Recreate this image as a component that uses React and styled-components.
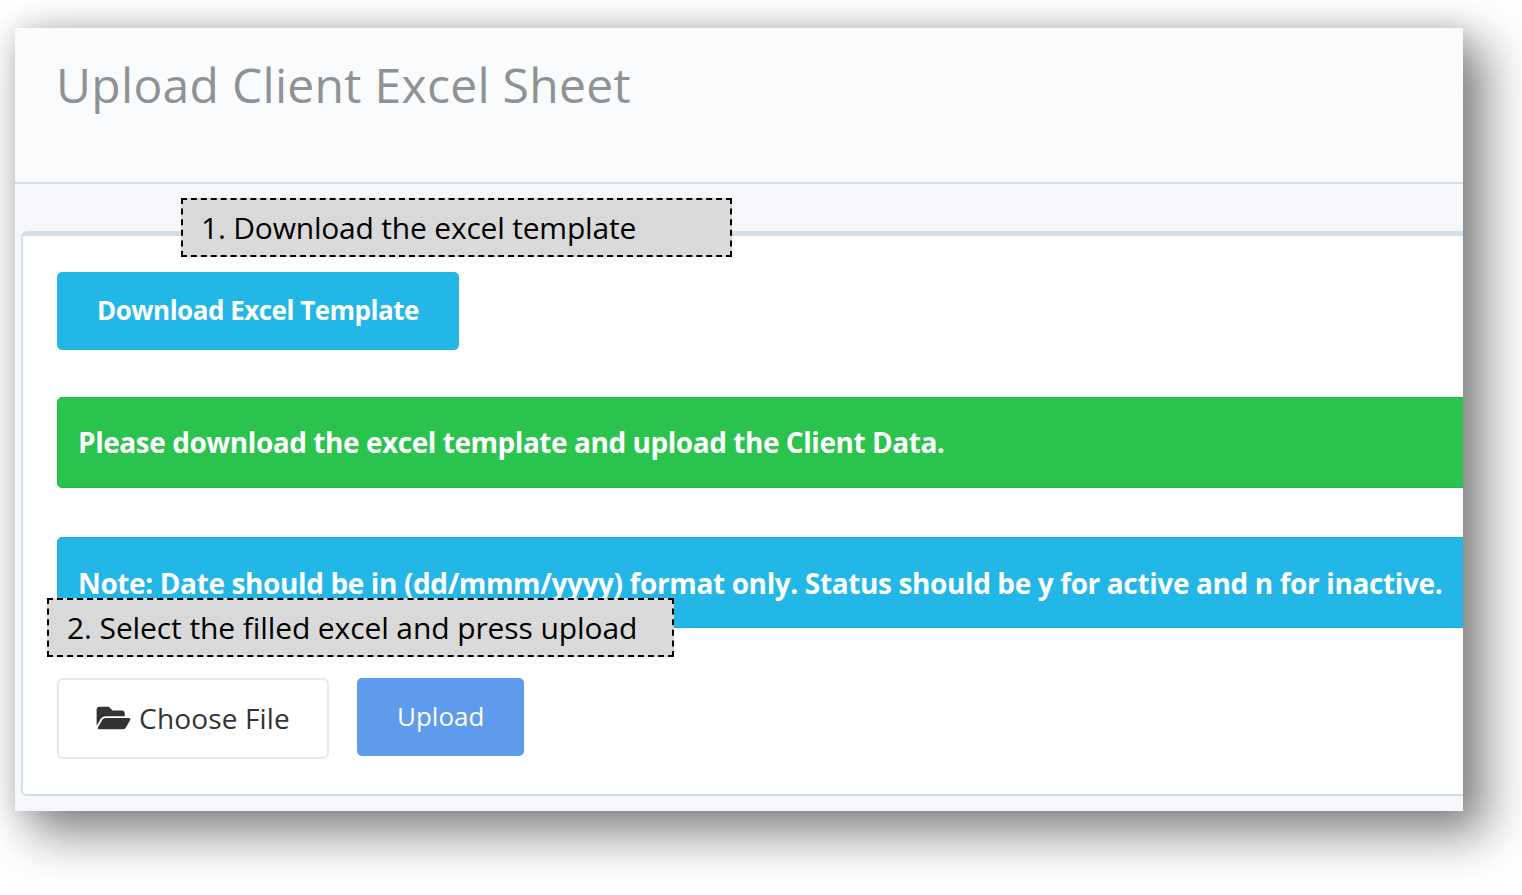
import React from "react";
import styled, { createGlobalStyle } from "styled-components";
import { FaFolderOpen } from "react-icons/fa";

const GlobalStyle = createGlobalStyle`
  html, body {
    margin: 0;
    background: #fff;
  }
  body {
    font-family: "Open Sans", "Noto Sans", "Liberation Sans", sans-serif;
    overflow: hidden;
  }
`;

const Stage = styled.div`
  width: 1522px;
  height: 895px;
  box-sizing: border-box;
  padding: 28px 59px 84px 15px;
  overflow: hidden;
`;

const Screen = styled.div`
  position: relative;
  height: 783px;
  display: flex;
  flex-direction: column;
  background: #f5f7fb;
  box-shadow: 0 0 26px rgba(0, 0, 0, 0.14), 20px 20px 46px 4px rgba(0, 0, 0, 0.46);
`;

const Clip = styled.div`
  flex: 1;
  display: flex;
  flex-direction: column;
  overflow: hidden;
`;

const Header = styled.header`
  height: 154px;
  flex: none;
  background: #fafbfd;
  border-bottom: 2px solid #d2dfe6;
  padding-left: 41px;
`;

const Title = styled.h1`
  margin: 0;
  padding-top: 25px;
  font-size: 48px;
  line-height: 64px;
  font-weight: 400;
  letter-spacing: 0.3px;
  color: #8f9294;
`;

const Card = styled.section`
  margin: 47px -40px 0 6px;
  height: 565px;
  box-sizing: border-box;
  background: #fff;
  border: 2px solid #d2dfe6;
  border-top-width: 5px;
  border-radius: 6px;
  padding: 36px 0 0 34px;
`;

const Button = styled.button`
  display: block;
  border: 0;
  border-radius: 5px;
  height: 78px;
  padding: 0 40px 2px;
  background: ${(p) => p.$bg};
  color: #fff;
  font-family: inherit;
  font-size: 26px;
  font-weight: ${(p) => p.$weight};
  letter-spacing: ${(p) => p.$track}px;
`;

const Alert = styled.div`
  height: 91px;
  margin-top: ${(p) => p.$top}px;
  box-sizing: border-box;
  display: flex;
  align-items: center;
  padding: 0 0 ${(p) => p.$lift}px 20px;
  border: 1px solid ${(p) => p.$line};
  border-radius: 5px;
  background: ${(p) => p.$bg};
  color: #fff;
  font-size: 28px;
  font-weight: 700;
  letter-spacing: ${(p) => p.$track}px;
  white-space: nowrap;
`;

const FileRow = styled.div`
  display: flex;
  align-items: flex-start;
  gap: 28px;
  margin-top: 50px;
`;

const FileButton = styled.label`
  width: 272px;
  height: 81px;
  box-sizing: border-box;
  display: flex;
  align-items: center;
  justify-content: center;
  gap: 8px;
  padding-bottom: 2px;
  background: #fff;
  border: 2px solid #e1e9ec;
  border-radius: 6px;
  color: #333;
  font-size: 28px;
  letter-spacing: 0.15px;
  svg {
    width: 35px;
    height: 30px;
    color: #333;
  }
`;

const Callout = styled.div`
  position: absolute;
  left: ${(p) => p.$left}px;
  top: ${(p) => p.$top}px;
  width: ${(p) => p.$width}px;
  height: 59px;
  box-sizing: border-box;
  display: flex;
  align-items: center;
  padding-left: 18px;
  background: #d9d9d9;
  border: 2px dashed #000;
  color: #000;
  font-size: 30px;
  letter-spacing: ${(p) => p.$track}px;
  white-space: nowrap;
`;

export default function App() {
  return (
    <>
      <GlobalStyle />
      <Stage>
        <Screen>
          <Clip>
            <Header>
              <Title>Upload Client Excel Sheet</Title>
            </Header>
            <Card>
              <Button $bg="#22b7e6" $weight={700} $track={-0.5}>Download Excel Template</Button>
              <Alert $top={47} $bg="#2ac34d" $line="#27b347" $lift={2} $track={-0.45}>
                Please download the excel template and upload the Client Data.
              </Alert>
              <Alert $top={49} $bg="#22b7e6" $line="#1fa9d5" $lift={0} $track={-0.38}>
                Note: Date should be in (dd/mmm/yyyy) format only. Status should be y for active and n for inactive.
              </Alert>
              <FileRow>
                <FileButton>
                  <FaFolderOpen />
                  Choose File
                </FileButton>
                <Button $bg="#5e9bec" $weight={400} $track={0}>Upload</Button>
              </FileRow>
            </Card>
          </Clip>
          <Callout $left={166} $top={170} $width={551} $track={-0.2}>1. Download the excel template</Callout>
          <Callout $left={32} $top={570} $width={627} $track={-0.1}>2. Select the filled excel and press upload</Callout>
        </Screen>
      </Stage>
    </>
  );
}
